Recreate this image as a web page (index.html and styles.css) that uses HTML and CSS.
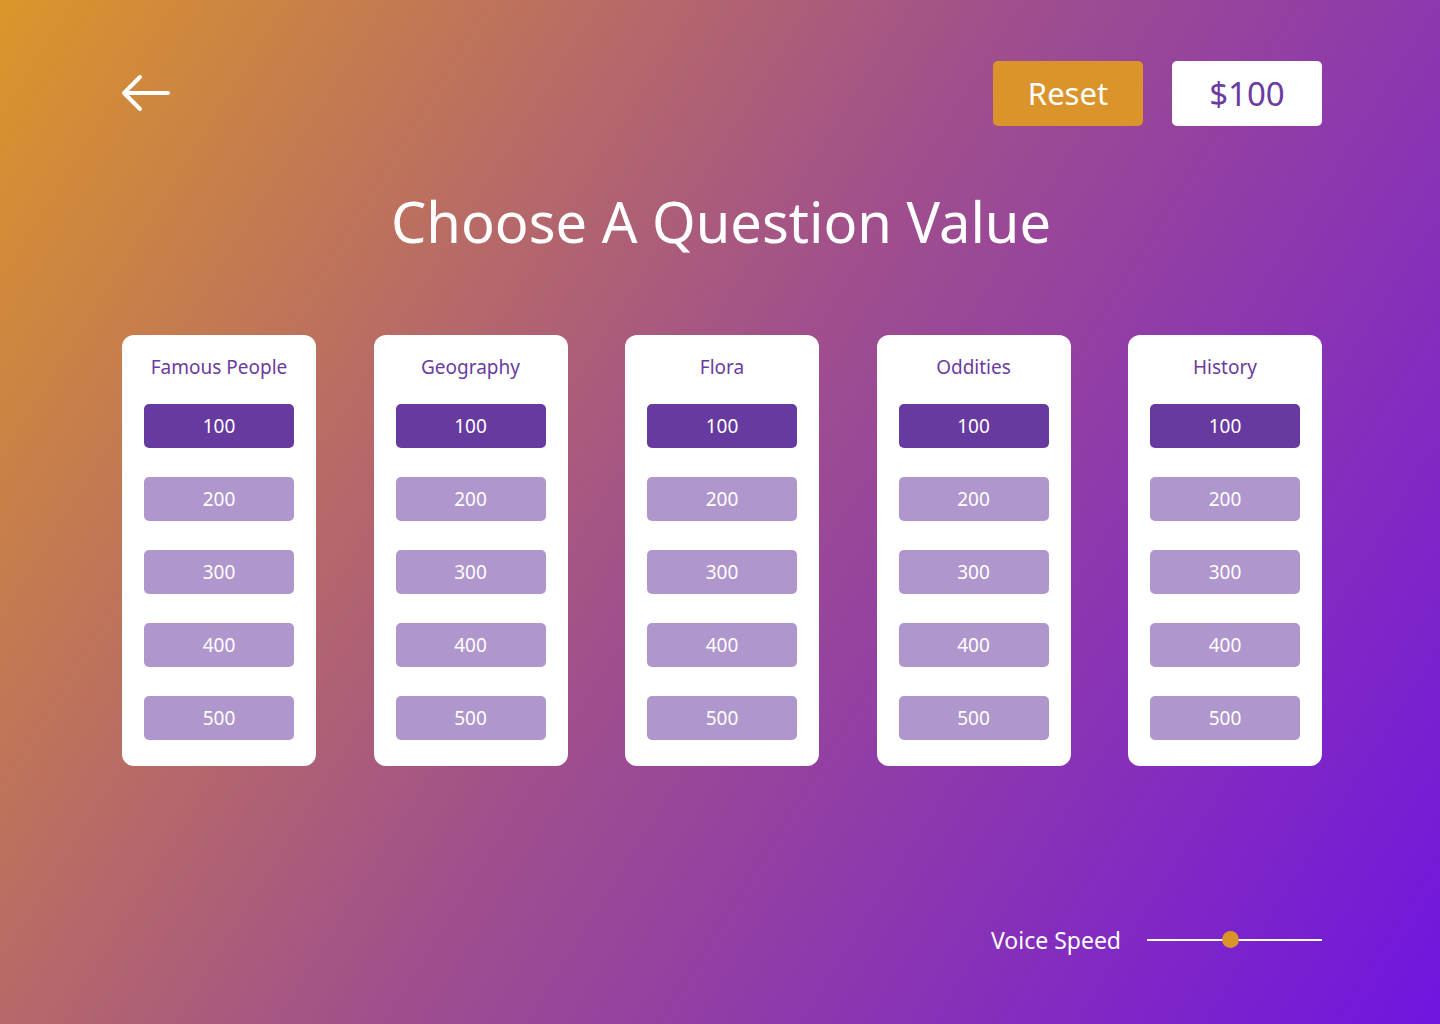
FILE: index.html
```html
<!DOCTYPE html>
<html>
<head>
<meta charset="utf-8">
<link rel="stylesheet" href="styles.css">
</head>
<body>
<div class="page">
  <header class="topbar">
    <button class="back" aria-label="Back">
      <svg width="52" height="40" viewBox="0 0 52 40"><path d="M48 20H4M20 4L4 20L20 36" fill="none" stroke="#fff" stroke-width="4" stroke-linecap="round" stroke-linejoin="round"/></svg>
    </button>
    <div class="actions">
      <button class="reset">Reset</button>
      <div class="score">$100</div>
    </div>
  </header>
  <h1 class="title">Choose A Question Value</h1>
  <main class="board">
    <section class="card"><h2>Famous People</h2><button class="val on">100</button><button class="val">200</button><button class="val">300</button><button class="val">400</button><button class="val">500</button></section>
    <section class="card"><h2>Geography</h2><button class="val on">100</button><button class="val">200</button><button class="val">300</button><button class="val">400</button><button class="val">500</button></section>
    <section class="card"><h2>Flora</h2><button class="val on">100</button><button class="val">200</button><button class="val">300</button><button class="val">400</button><button class="val">500</button></section>
    <section class="card"><h2>Oddities</h2><button class="val on">100</button><button class="val">200</button><button class="val">300</button><button class="val">400</button><button class="val">500</button></section>
    <section class="card"><h2>History</h2><button class="val on">100</button><button class="val">200</button><button class="val">300</button><button class="val">400</button><button class="val">500</button></section>
  </main>
  <footer class="speed">
    <span class="speed-label">Voice Speed</span>
    <div class="slider"><span class="knob"></span></div>
  </footer>
</div>
</body>
</html>
```
FILE: styles.css
```css
* { box-sizing: border-box; }
html, body { margin: 0; padding: 0; }
body {
  width: 1440px;
  height: 1024px;
  overflow: hidden;
  font-family: "Noto Sans", "Open Sans", sans-serif;
  background: linear-gradient(122deg, #DB962A 0%, #A1508B 48%, #7015E0 100%);
}
.page {
  height: 1024px;
  padding: 60px 118px 0 120px;
  display: flex;
  flex-direction: column;
}
.topbar {
  display: flex;
  justify-content: space-between;
  align-items: center;
  height: 66px;
}
.back {
  background: none;
  border: 0;
  padding: 0;
  display: flex;
  cursor: pointer;
}
.actions { display: flex; gap: 29px; align-items: center; }
.reset, .score {
  width: 150px;
  height: 65px;
  border-radius: 5px;
  display: flex;
  align-items: center;
  justify-content: center;
  font-family: inherit;
  font-size: 31px;
}
.reset {
  background: #DB942C;
  color: #fff;
  border: 0;
}
.score {
  background: #fff;
  color: #6A3BA0;
  font-size: 33px;
}
.title {
  margin: 55px 0 0;
  text-align: center;
  color: #fff;
  font-weight: 400;
  font-size: 56px;
  line-height: 80px;
  letter-spacing: 0;
}
.board {
  margin-top: 74px;
  display: flex;
  justify-content: space-between;
  padding: 0 0 0 2px;
}
.card {
  width: 194px;
  height: 431px;
  background: #fff;
  border-radius: 12px;
  display: flex;
  flex-direction: column;
  align-items: center;
  padding-top: 19px;
  gap: 29px;
}
.card h2 {
  margin: 0 0 -5px;
  font-weight: 400;
  font-size: 19px;
  line-height: 26px;
  color: #6A3BA0;
}
.val {
  width: 150px;
  height: 44px;
  border: 0;
  border-radius: 5px;
  background: #AF96CC;
  color: #fff;
  font-family: inherit;
  font-size: 19px;
  display: flex;
  align-items: center;
  justify-content: center;
  padding: 0;
}
.val.on { background: #673A9F; }
.speed {
  margin-top: auto;
  margin-bottom: 68px;
  display: flex;
  justify-content: flex-end;
  align-items: center;
  gap: 26px;
}
.speed-label {
  color: #fff;
  font-size: 23px;
}
.slider {
  position: relative;
  width: 175px;
  height: 2px;
  background: #fff;
}
.knob {
  position: absolute;
  left: 75px;
  top: -8px;
  width: 17px;
  height: 17px;
  border-radius: 50%;
  background: #DB942C;
}
```
